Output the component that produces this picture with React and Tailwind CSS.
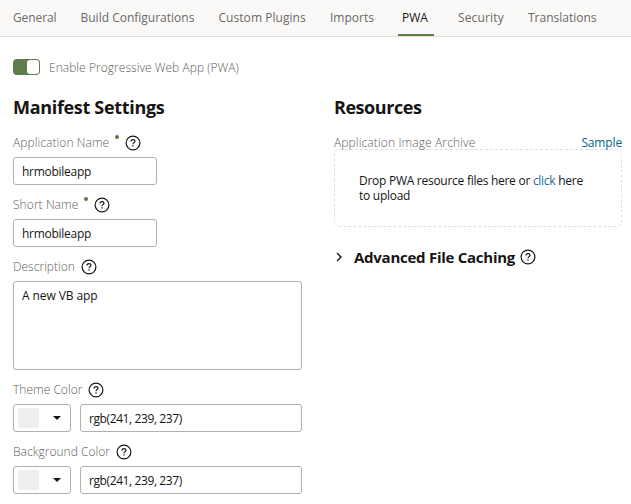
const tabs = [
  { name: 'General', cls: 'w-[67.5px] tracking-[-0.1px]' },
  { name: 'Build Configurations', cls: 'w-[138px]' },
  { name: 'Custom Plugins', cls: 'w-[111.5px] tracking-[0.05px]' },
  { name: 'Imports', cls: 'w-[72px]' },
  { name: 'PWA', cls: 'w-[56px]', active: true },
  { name: 'Security', cls: 'w-[70px] tracking-[0.15px]' },
  { name: 'Translations', cls: 'w-[70px]' },
];

function Help() {
  return (
    <svg className="h-4 w-4 shrink-0" viewBox="0 0 16 16" fill="none" stroke="#161513">
      <circle cx="8" cy="8" r="6.9" strokeWidth="1.2" />
      <path d="M6 6.5C6 5.3 6.8 4.6 8 4.6s2 .7 2 1.7c0 1.3-2 1.4-2 2.9" strokeWidth="1.2" />
      <path d="M8 10.2v1.4" strokeWidth="1.3" />
    </svg>
  );
}

function Label({ children, required }) {
  return (
    <div className="flex h-4 items-center text-xs font-light text-[#5f5d5a]">
      <span className={'whitespace-nowrap ' + (required ? 'tracking-[0.07px]' : 'tracking-[0.02px]')}>{children}</span>
      {required && <span className="mb-3 ml-[6px] h-1 w-1 rounded-full bg-[#5a7a48]" />}
      <span className="ml-[6px] flex"><Help /></span>
    </div>
  );
}

const box = 'rounded-[3px] border border-[#b1b0af] bg-white';

function NameField({ label, value }) {
  return (
    <div className="flex flex-col gap-[6px]">
      <Label required>{label}</Label>
      <div className={'flex h-7 w-36 items-center px-2 pt-[2px] tracking-[-0.27px] ' + box}>{value}</div>
    </div>
  );
}

function ColorField({ label }) {
  return (
    <div className="flex flex-col gap-[6px]">
      <Label>{label}</Label>
      <div className="flex gap-[9px]">
        <div className={'flex h-7 w-[58px] items-center pl-1 ' + box}>
          <span className="h-5 w-[21px] bg-[#f1efed]" />
          <svg className="ml-[14px] h-1 w-2" viewBox="0 0 8 4"><path d="M0 0h8L4 4z" fill="#161513" /></svg>
        </div>
        <div className={'flex h-7 w-[222px] items-center px-2 pt-[2px] tracking-[-0.4px] ' + box}>
          <span>rgb(241, 239, 237)</span>
        </div>
      </div>
    </div>
  );
}

export default function App() {
  return (
    <div className="h-[504px] w-[631px] overflow-hidden bg-white font-['Open_Sans','Noto_Sans',sans-serif] text-xs text-[#161513]">
      <nav className="flex h-[37px] border-b border-[#e0dfdd] bg-[#faf9f8] pl-[13px]">
        {tabs.map((t) => (
          <div key={t.name} className={'flex h-9 shrink-0 whitespace-nowrap ' + t.cls}>
            {t.active ? (
              <span className="-ml-1 flex h-9 w-9 items-center border-b-2 border-[#5a7f48] pl-1 pt-[2px]">{t.name}</span>
            ) : (
              <span className="flex items-center text-[#6b6966]">{t.name}</span>
            )}
          </div>
        ))}
      </nav>
      <div className="flex items-center pl-[13px] pt-[22px]">
        <div className="flex h-4 w-[27px] items-center justify-end rounded-[4px] bg-[#5f7d4f] pr-px">
          <span className="h-[14px] w-3 rounded-[3px] bg-white" />
        </div>
        <span className="-mb-[2px] ml-[9px] font-light leading-4 tracking-[0.04px] text-[#5f5d5a]">Enable Progressive Web App (PWA)</span>
      </div>
      <div className="flex gap-8 pl-[13px] pt-5">
        <section className="w-[289px]">
          <h2 className="h-6 text-lg font-bold leading-6 tracking-[-0.32px]">Manifest Settings</h2>
          <div className="mt-4 flex flex-col gap-3">
            <NameField label="Application Name" value="hrmobileapp" />
            <NameField label="Short Name" value="hrmobileapp" />
            <div className="flex flex-col gap-[6px]">
              <Label>Description</Label>
              <div className={'h-[89px] px-2 pt-[6px] leading-4 tracking-[-0.08px] ' + box}>A new VB app</div>
            </div>
            <ColorField label="Theme Color" />
            <ColorField label="Background Color" />
          </div>
        </section>
        <section className="w-72">
          <h2 className="h-6 text-lg font-bold leading-6 tracking-[-0.45px]">Resources</h2>
          <div className="mt-4 flex h-[14px] justify-between leading-4">
            <span className="font-light tracking-[0.12px] text-[#5f5d5a]">Application Image Archive</span>
            <span className="tracking-[-0.15px] text-[#00688c]">Sample</span>
          </div>
          <div className="h-[78px] rounded-md border border-dashed border-[#dfdedd] pl-6 pt-[23px] leading-[15px]">
            <p className="w-[235px] tracking-[-0.27px]">Drop PWA resource files here or <span className="text-[#226b95]">click</span> here to upload</p>
          </div>
          <div className="mt-5 flex h-5 items-center">
            <svg className="ml-[2px] h-2.5 w-[7px]" viewBox="0 0 7 10" fill="none"><path d="M1 1l4 4-4 4" stroke="#161513" strokeWidth="1.4" /></svg>
            <h3 className="ml-[11px] mr-[2.5px] w-[163px] whitespace-nowrap text-[15px] font-bold tracking-[-0.26px]">Advanced File Caching</h3>
            <Help />
          </div>
        </section>
      </div>
    </div>
  );
}
